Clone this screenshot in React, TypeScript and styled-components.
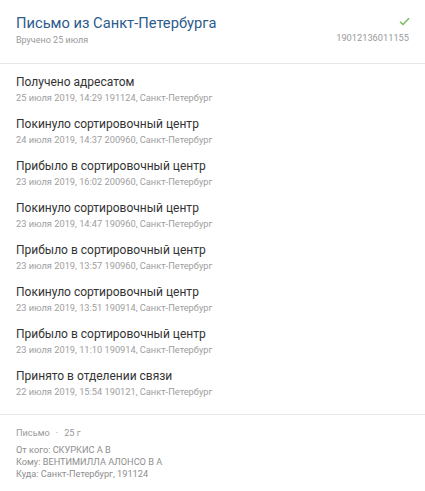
import styled, { createGlobalStyle } from 'styled-components'

const GlobalStyle = createGlobalStyle`
  html, body {
    margin: 0;
    padding: 0;
    background: #ffffff;
  }
  body {
    font-family: Roboto, 'Liberation Sans', Arial, sans-serif;
  }
`

const Card = styled.div`
  width: 425px;
  height: 491px;
  background: #ffffff;
  display: flex;
  flex-direction: column;
`

const Header = styled.div`
  display: flex;
  justify-content: space-between;
  align-items: flex-start;
  padding: 14px 16px 0 16px;
  height: 49px;
  border-bottom: 1px solid #e6e6e6;
`

const Title = styled.div`
  font-size: 14.7px;
  line-height: 19px;
  color: #2c5b8c;
`

const Subtitle = styled.div`
  font-size: 9px;
  line-height: 12px;
  color: #9a9a9a;
  margin-top: 1px;
`

const HeaderRight = styled.div`
  display: flex;
  flex-direction: column;
  align-items: flex-end;
`

const Check = styled.svg`
  width: 11px;
  height: 9px;
  margin: 3px -1px 6px 0;
`

const Barcode = styled.div`
  font-size: 9.25px;
  line-height: 12px;
  color: #9a9a9a;
`

const List = styled.div`
  display: flex;
  flex-direction: column;
  padding: 10px 16px 4px;
  border-bottom: 1px solid #e6e6e6;
`

const Item = styled.div`
  height: 42px;
`

const ItemTitle = styled.div`
  font-size: 12px;
  line-height: 16px;
  color: #333333;
`

const ItemMeta = styled.div`
  font-size: 9.25px;
  line-height: 13px;
  color: #9e9e9e;
  margin-top: 1px;
`

const Footer = styled.div`
  padding: 12px 16px 0;
  font-size: 9.2px;
  line-height: 12px;
  color: #8e8e8e;
`

const FooterKind = styled.div`
  margin-bottom: 5px;
  color: #9a9a9a;
`

const Dot = styled.span`
  margin: 0 6px;
`

const events = [
  ['Получено адресатом', '25 июля 2019, 14:29 191124, Санкт-Петербург'],
  ['Покинуло сортировочный центр', '24 июля 2019, 14:37 200960, Санкт-Петербург'],
  ['Прибыло в сортировочный центр', '23 июля 2019, 16:02 200960, Санкт-Петербург'],
  ['Покинуло сортировочный центр', '23 июля 2019, 14:47 190960, Санкт-Петербург'],
  ['Прибыло в сортировочный центр', '23 июля 2019, 13:57 190960, Санкт-Петербург'],
  ['Покинуло сортировочный центр', '23 июля 2019, 13:51 190914, Санкт-Петербург'],
  ['Прибыло в сортировочный центр', '23 июля 2019, 11:10 190914, Санкт-Петербург'],
  ['Принято в отделении связи', '22 июля 2019, 15:54 190121, Санкт-Петербург'],
]

export default function App() {
  return (
    <>
      <GlobalStyle />
      <Card>
        <Header>
          <div>
            <Title>Письмо из Санкт-Петербурга</Title>
            <Subtitle>Вручено 25 июля</Subtitle>
          </div>
          <HeaderRight>
            <Check viewBox="0 0 11 9">
              <path d="M1 4.8 L4 7.6 L10 1.2" fill="none" stroke="#7cb663" strokeWidth="1.4" />
            </Check>
            <Barcode>19012136011155</Barcode>
          </HeaderRight>
        </Header>
        <List>
          {events.map(([title, meta], i) => (
            <Item key={i}>
              <ItemTitle>{title}</ItemTitle>
              <ItemMeta>{meta}</ItemMeta>
            </Item>
          ))}
        </List>
        <Footer>
          <FooterKind>
            Письмо<Dot>·</Dot>25 г
          </FooterKind>
          <div>От кого: СКУРКИС А В</div>
          <div>Кому: ВЕНТИМИЛЛА АЛОНСО В А</div>
          <div>Куда: Санкт-Петербург, 191124</div>
        </Footer>
      </Card>
    </>
  )
}
